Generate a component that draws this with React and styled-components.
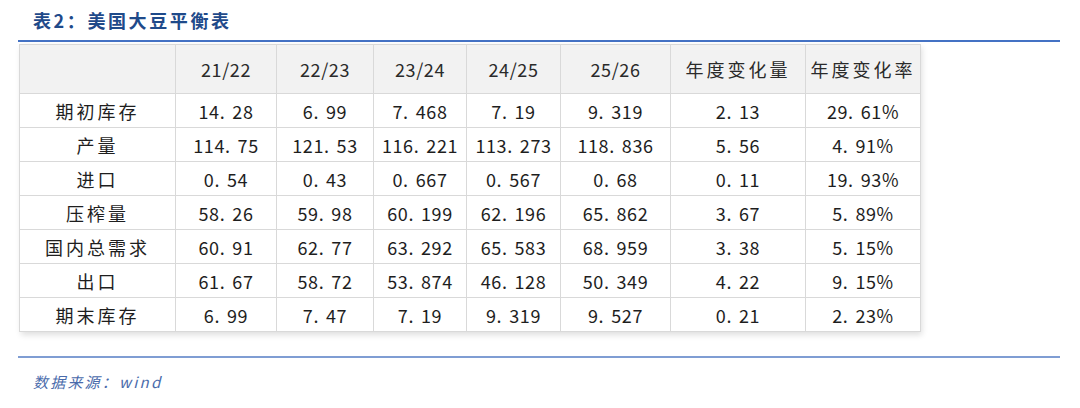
import React from "react";
import styled, { createGlobalStyle } from "styled-components";

const Global = createGlobalStyle`
  html, body { margin: 0; padding: 0; background: #ffffff; }
  body { width: 1080px; font-family: "Noto Sans CJK SC", "Noto Sans", sans-serif; }
`;

const Page = styled.div`
  width: 1080px;
  height: 408px;
  padding: 0 20px 0 18px;
  box-sizing: border-box;
`;

const TitleBar = styled.div`
  height: 40px;
  display: flex;
  align-items: center;
  padding-left: 15px;
  border-bottom: 2px solid #4472c4;
`;

const Title = styled.h1`
  margin: 0;
  font-family: "Noto Sans CJK SC", sans-serif;
  font-size: 18px;
  font-weight: 700;
  letter-spacing: 2.6px;
  color: #1f4a8a;
  line-height: 1;
`;

const TableWrap = styled.div`
  margin: 2px 0 0 1px;
  width: 901px;
  box-shadow: 2px 3px 6px rgba(0, 0, 0, 0.13);
`;

const Table = styled.table`
  width: 901px;
  border-collapse: collapse;
  table-layout: fixed;
  font-family: "Noto Sans CJK SC", sans-serif;
  color: #1e1e1e;
`;

const HeadRow = styled.tr`
  height: 49px;
  background: #f2f2f2;
`;

const BodyRow = styled.tr`
  height: 34px;
  background: #ffffff;
`;

const Cell = styled.td`
  border: 1px solid #d9d9d9;
  padding: 0;
  text-align: center;
  font-size: 18px;
  line-height: 1;
  letter-spacing: ${(p) => (p.$cjk ? "3px" : "0.6px")};
  white-space: nowrap;
`;

const HeadCell = styled(Cell).attrs({ as: "th" })`
  font-weight: 400;
  color: #2a2a2a;
`;

const Dot = styled.span`
  padding-right: 7px;
`;

const Rule = styled.div`
  margin-top: 24px;
  height: 2px;
  background: #7f9dd3;
`;

const Source = styled.div`
  padding: 15px 0 0 15px;
  font-family: "Noto Sans CJK SC", sans-serif;
  font-style: italic;
  font-size: 15px;
  letter-spacing: 2.2px;
  color: #4a6bab;
  line-height: 18px;
`;

const widths = [156, 101, 97, 93, 94, 110, 135, 115];
const headers = ["", "21/22", "22/23", "23/24", "24/25", "25/26", "年度变化量", "年度变化率"];
const rows = [
  ["期初库存", "14.28", "6.99", "7.468", "7.19", "9.319", "2.13", "29.61%"],
  ["产量", "114.75", "121.53", "116.221", "113.273", "118.836", "5.56", "4.91%"],
  ["进口", "0.54", "0.43", "0.667", "0.567", "0.68", "0.11", "19.93%"],
  ["压榨量", "58.26", "59.98", "60.199", "62.196", "65.862", "3.67", "5.89%"],
  ["国内总需求", "60.91", "62.77", "63.292", "65.583", "68.959", "3.38", "5.15%"],
  ["出口", "61.67", "58.72", "53.874", "46.128", "50.349", "4.22", "9.15%"],
  ["期末库存", "6.99", "7.47", "7.19", "9.319", "9.527", "0.21", "2.23%"],
];

const Num = ({ v }) => {
  const i = v.indexOf(".");
  if (i < 0) return v;
  return (
    <>
      {v.slice(0, i)}
      <Dot>.</Dot>
      {v.slice(i + 1)}
    </>
  );
};

export default function App() {
  return (
    <>
      <Global />
      <Page>
        <TitleBar>
          <Title>表2：美国大豆平衡表</Title>
        </TitleBar>
        <TableWrap>
          <Table>
            <colgroup>
              {widths.map((w, i) => (
                <col key={i} style={{ width: w }} />
              ))}
            </colgroup>
            <thead>
              <HeadRow>
                {headers.map((h, i) => (
                  <HeadCell key={i} $cjk={i >= 6}>
                    {h}
                  </HeadCell>
                ))}
              </HeadRow>
            </thead>
            <tbody>
              {rows.map((r, ri) => (
                <BodyRow key={ri}>
                  {r.map((c, ci) => (
                    <Cell key={ci} $cjk={ci === 0}>
                      {ci === 0 ? c : <Num v={c} />}
                    </Cell>
                  ))}
                </BodyRow>
              ))}
            </tbody>
          </Table>
        </TableWrap>
        <Rule />
        <Source>数据来源：wind</Source>
      </Page>
    </>
  );
}
